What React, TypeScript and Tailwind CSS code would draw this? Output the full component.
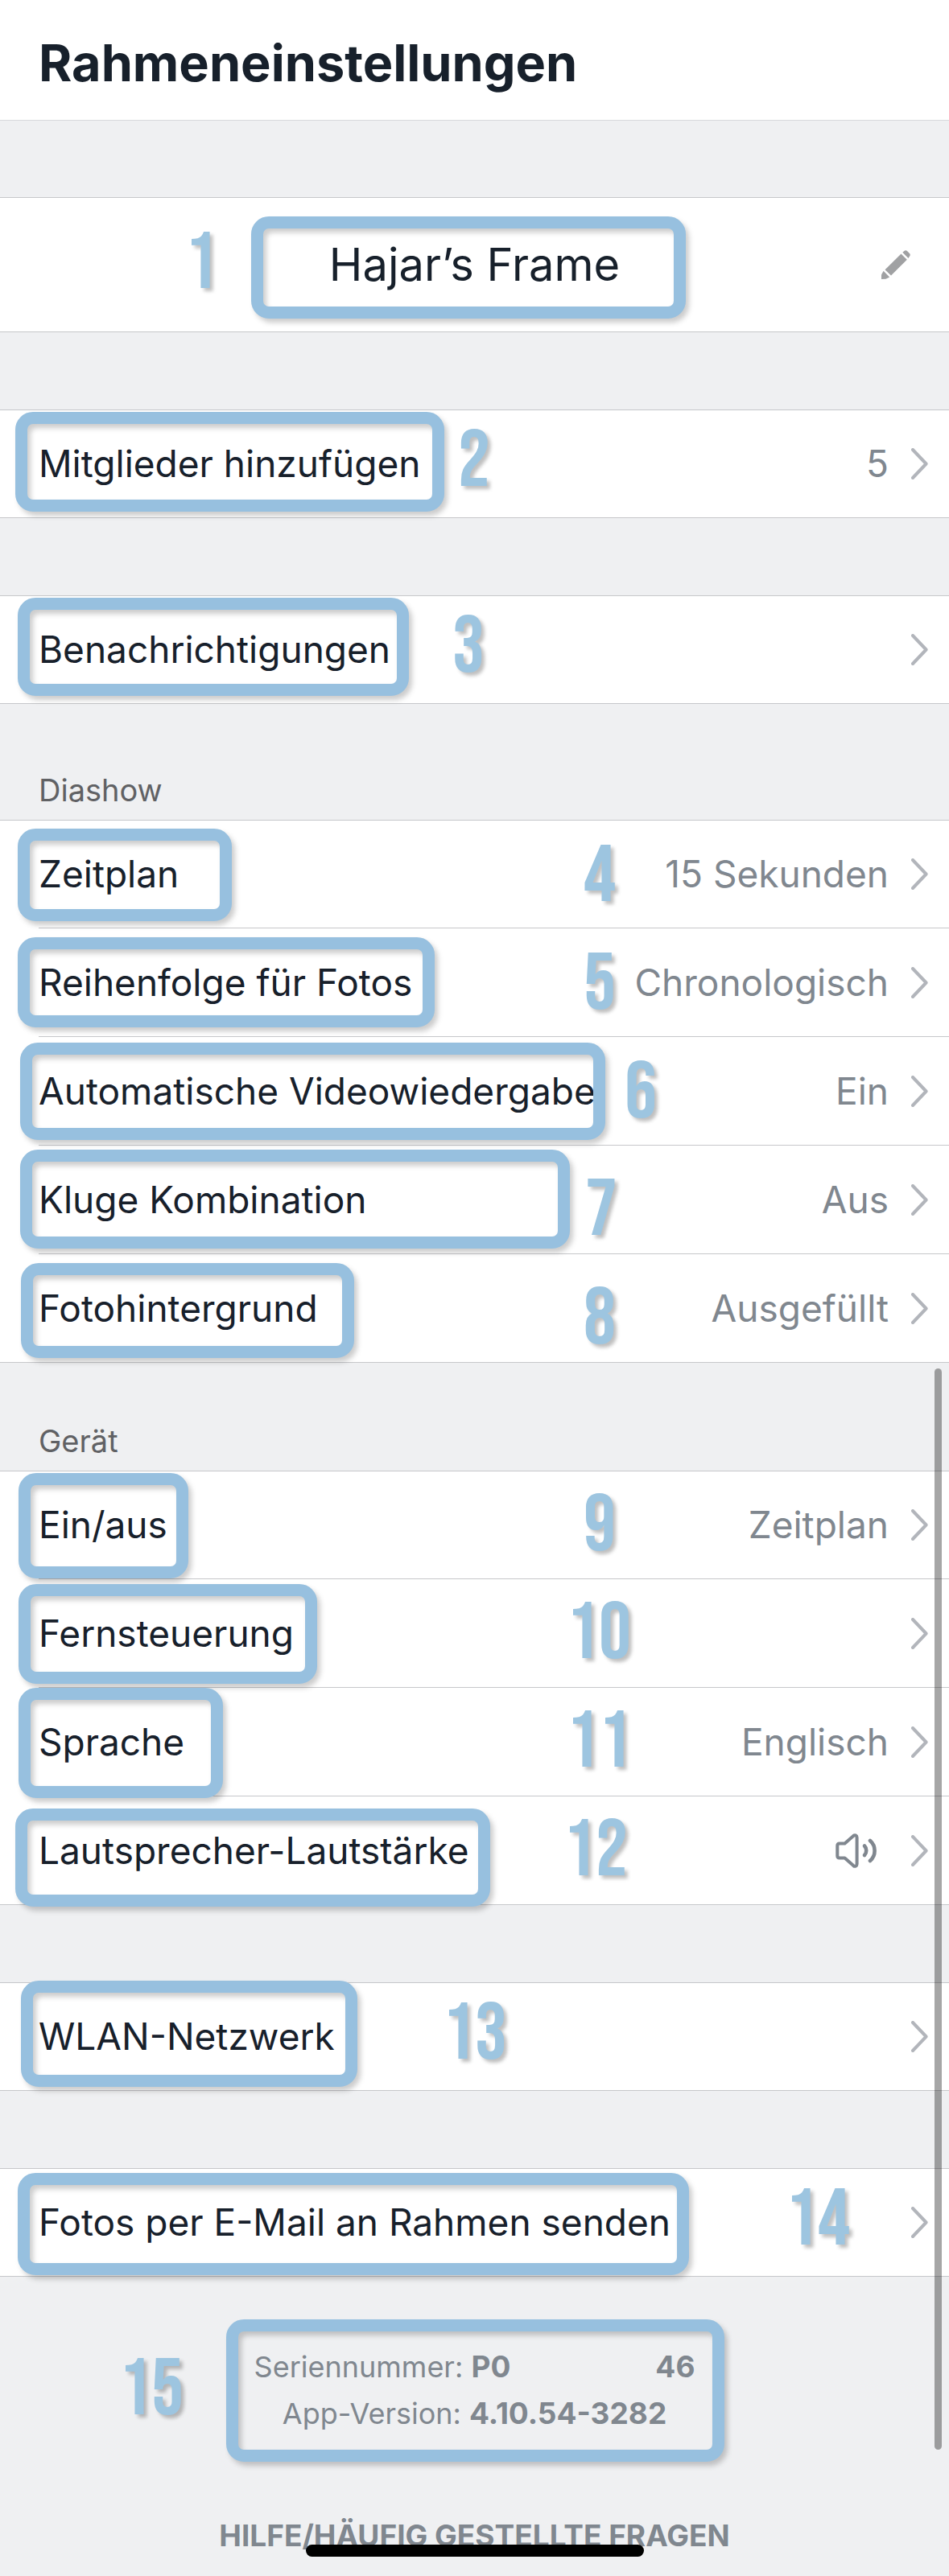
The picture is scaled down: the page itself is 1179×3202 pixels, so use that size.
import type { ReactNode } from 'react'

type Row = {
  label: string
  value?: ReactNode
  step: number
  frame: string
  pin: string
}

function Chevron() {
  return (
    <svg viewBox="0 0 21 39" className="h-[39px] w-[21px] shrink-0" fill="none" aria-hidden="true">
      <path d="M2 2 18.6 19.5 2 37" stroke="#b2b5bb" strokeWidth="4" strokeLinecap="round" strokeLinejoin="round" />
    </svg>
  )
}

function Speaker() {
  return (
    <svg viewBox="0 0 52 43" className="mr-3.5 h-[43px] w-[52px]" fill="none" role="img" aria-label="Laut">
      <g stroke="#80878f" strokeWidth="4" strokeLinecap="round" strokeLinejoin="round">
        <path d="M5 12.5H11.5L22.3 2.9C24 1.5 26.6 2.4 26.6 4.9V38.1C26.6 40.6 24 41.5 22.3 40.1L11.5 30.5H5C3.3 30.5 2.3 29.5 2.3 27.8V15.2C2.3 13.5 3.3 12.5 5 12.5Z" />
        <path d="M36 15.5C39 18.5 39 24 36 27" strokeWidth="4.6" />
        <path d="M43 9C50.5 15.5 50.5 27.5 43 34" strokeWidth="4.6" />
      </g>
    </svg>
  )
}

function Pencil() {
  return (
    <svg viewBox="0 0 36 36" className="size-9" fill="#a0a1a3" aria-hidden="true">
      <path d="M0 36V30.5L2.6 25.8L10.2 33.4L5.5 35.8Z" />
      <path d="M4.5 24.2 24.5 4.5 31.8 11.8 12 31.5Z" />
      <path d="M26.3 2.7 28.3.9C29.3 0 31 0 32 .9L35 4C36 5 36 6.6 35.1 7.6L33.5 9.9Z" />
    </svg>
  )
}

// Rounded marker box drawn over a setting
function Frame({ className }: { className: string }) {
  return (
    <span
      aria-hidden="true"
      className={`pointer-events-none absolute rounded-[22px] border-[15px] border-[#97c0df] drop-shadow-[4px_5px_3px_rgba(0,0,0,0.2)] ${className}`}
    />
  )
}

function Pin({ step, className }: { step: number; className: string }) {
  return (
    <span
      className={`pointer-events-none absolute font-['Bebas_Neue_Book','Bebas_Neue','Roboto_Condensed','Liberation_Sans_Narrow',sans-serif] text-[100px] leading-[80px] text-[#9dc5e0] [text-shadow:4px_4px_4px_rgba(0,0,0,0.25)] ${className}`}
    >
      {step}
    </span>
  )
}

function SettingsList({ rows }: { rows: Row[] }) {
  return (
    <ul className="bg-white">
      {rows.map((row) => (
        <li
          key={row.step}
          className="group relative h-[135px] border-[#c6c7ca] pl-12 first:border-t last:border-b"
        >
          <button
            type="button"
            className="flex size-full items-center border-b border-[#c6c7ca] pr-[26px] text-left text-[46px] group-last:border-b-0"
          >
            <span className="grow">{row.label}</span>
            <span className="mr-7 text-[#80878f]">{row.value}</span>
            <Chevron />
          </button>
          <Frame className={row.frame} />
          <Pin step={row.step} className={row.pin} />
        </li>
      ))}
    </ul>
  )
}

const members: Row[] = [
  { label: 'Mitglieder hinzufügen', value: '5', step: 2, frame: 'left-[19px] top-0.5 h-[124px] w-[533px]', pin: 'left-[569px] top-6' },
]

const notifications: Row[] = [
  { label: 'Benachrichtigungen', step: 3, frame: 'left-[22px] top-0.5 h-[122px] w-[486px]', pin: 'left-[562px] top-6' },
]

const slideshow: Row[] = [
  { label: 'Zeitplan', value: '15 Sekunden', step: 4, frame: 'left-[22px] top-[10px] h-[115px] w-[266px]', pin: 'left-[725px] top-[30px]' },
  { label: 'Reihenfolge für Fotos', value: 'Chronologisch', step: 5, frame: 'left-[22px] top-[11px] h-[112px] w-[518px]', pin: 'left-[725px] top-[30px]' },
  { label: 'Automatische Videowiedergabe', value: 'Ein', step: 6, frame: 'left-[25px] top-[7px] h-[121px] w-[727px]', pin: 'left-[776px] top-[30px]' },
  { label: 'Kluge Kombination', value: 'Aus', step: 7, frame: 'left-[25px] top-[5px] h-[123px] w-[683px]', pin: 'left-[727px] top-[41px]' },
  { label: 'Fotohintergrund', value: 'Ausgefüllt', step: 8, frame: 'left-[26px] top-[11px] h-[118px] w-[414px]', pin: 'left-[725px] top-[41px]' },
]

const device: Row[] = [
  { label: 'Ein/aus', value: 'Zeitplan', step: 9, frame: 'left-[23px] top-0.5 h-[131px] w-[211px]', pin: 'left-[725px] top-7' },
  { label: 'Fernsteuerung', step: 10, frame: 'left-[23px] top-[6px] h-[124px] w-[371px]', pin: 'left-[704px] top-7' },
  { label: 'Sprache', value: 'Englisch', step: 11, frame: 'left-[23px] top-0 h-[137px] w-[254px]', pin: 'left-[704px] top-7' },
  { label: 'Lautsprecher-Lautstärke', value: <Speaker />, step: 12, frame: 'left-[19px] top-[15px] h-[122px] w-[590px]', pin: 'left-[700px] top-7' },
]

const network: Row[] = [
  { label: 'WLAN-Netzwerk', step: 13, frame: 'left-[26px] top-[-3px] h-[132px] w-[418px]', pin: 'left-[550px] top-6' },
]

const email: Row[] = [
  { label: 'Fotos per E-Mail an Rahmen senden', step: 14, frame: 'left-[22px] top-[5px] h-[127px] w-[834px]', pin: 'left-[976px] top-6' },
]

export default function App() {
  return (
    <div className="relative min-h-screen overflow-hidden bg-[#eff0f2] font-['Inter',sans-serif] text-[#17202b]">
      <header className="border-b border-[#d8d9dc] bg-white px-12 pt-[38px] pb-[31px]">
        <h1 className="text-[63px] leading-[80px] font-bold">Rahmeneinstellungen</h1>
      </header>

      <main>
        <section className="relative mt-[95px] flex h-[168px] items-center border-y border-[#c6c7ca] bg-white px-12">
          <span className="w-9" />
          <h2 className="grow text-center text-[56px] leading-[72px]">Hajar’s Frame</h2>
          <button type="button" aria-label="Namen bearbeiten">
            <Pencil />
          </button>
          <Frame className="top-[23px] left-[312px] h-[127px] w-[540px]" />
          <Pin step={1} className="top-[42px] left-[230px]" />
        </section>

        <section className="mt-24">
          <SettingsList rows={members} />
        </section>
        <section className="mt-24">
          <SettingsList rows={notifications} />
        </section>
        <section>
          <h2 className="px-12 pt-[83px] pb-[13px] text-[38px] leading-[48px] text-[#606164]">Diashow</h2>
          <SettingsList rows={slideshow} />
        </section>
        <section>
          <h2 className="px-12 pt-[73px] pb-[13px] text-[38px] leading-[48px] text-[#606164]">Gerät</h2>
          <SettingsList rows={device} />
        </section>
        <section className="mt-24">
          <SettingsList rows={network} />
        </section>
        <section className="mt-24">
          <SettingsList rows={email} />
        </section>
      </main>

      <footer className="relative pt-[83px] text-center text-4xl leading-[58px] text-[#80878f]">
        <p>
          Seriennummer: <strong className="text-[37px] font-bold">P0</strong>
          <strong className="ml-[180px] text-[37px] font-bold">46</strong>
        </p>
        <p>
          App-Version: <strong className="text-[37px] font-bold">4.10.54-3282</strong>
        </p>
        <a href="#hilfe" className="mt-[94px] block text-[37px] font-bold">
          HILFE/HÄUFIG GESTELLTE FRAGEN
        </a>
        <Frame className="top-[53px] left-[281px] h-[177px] w-[619px]" />
        <Pin step={15} className="top-[101px] left-[148px]" />
      </footer>

      <div className="absolute right-[9px] bottom-[157px] h-[1344px] w-[9px] rounded-full bg-black/35" />
      <div className="absolute bottom-6 left-1/2 h-[15px] w-[420px] -translate-x-1/2 rounded-full bg-black" />
    </div>
  )
}
